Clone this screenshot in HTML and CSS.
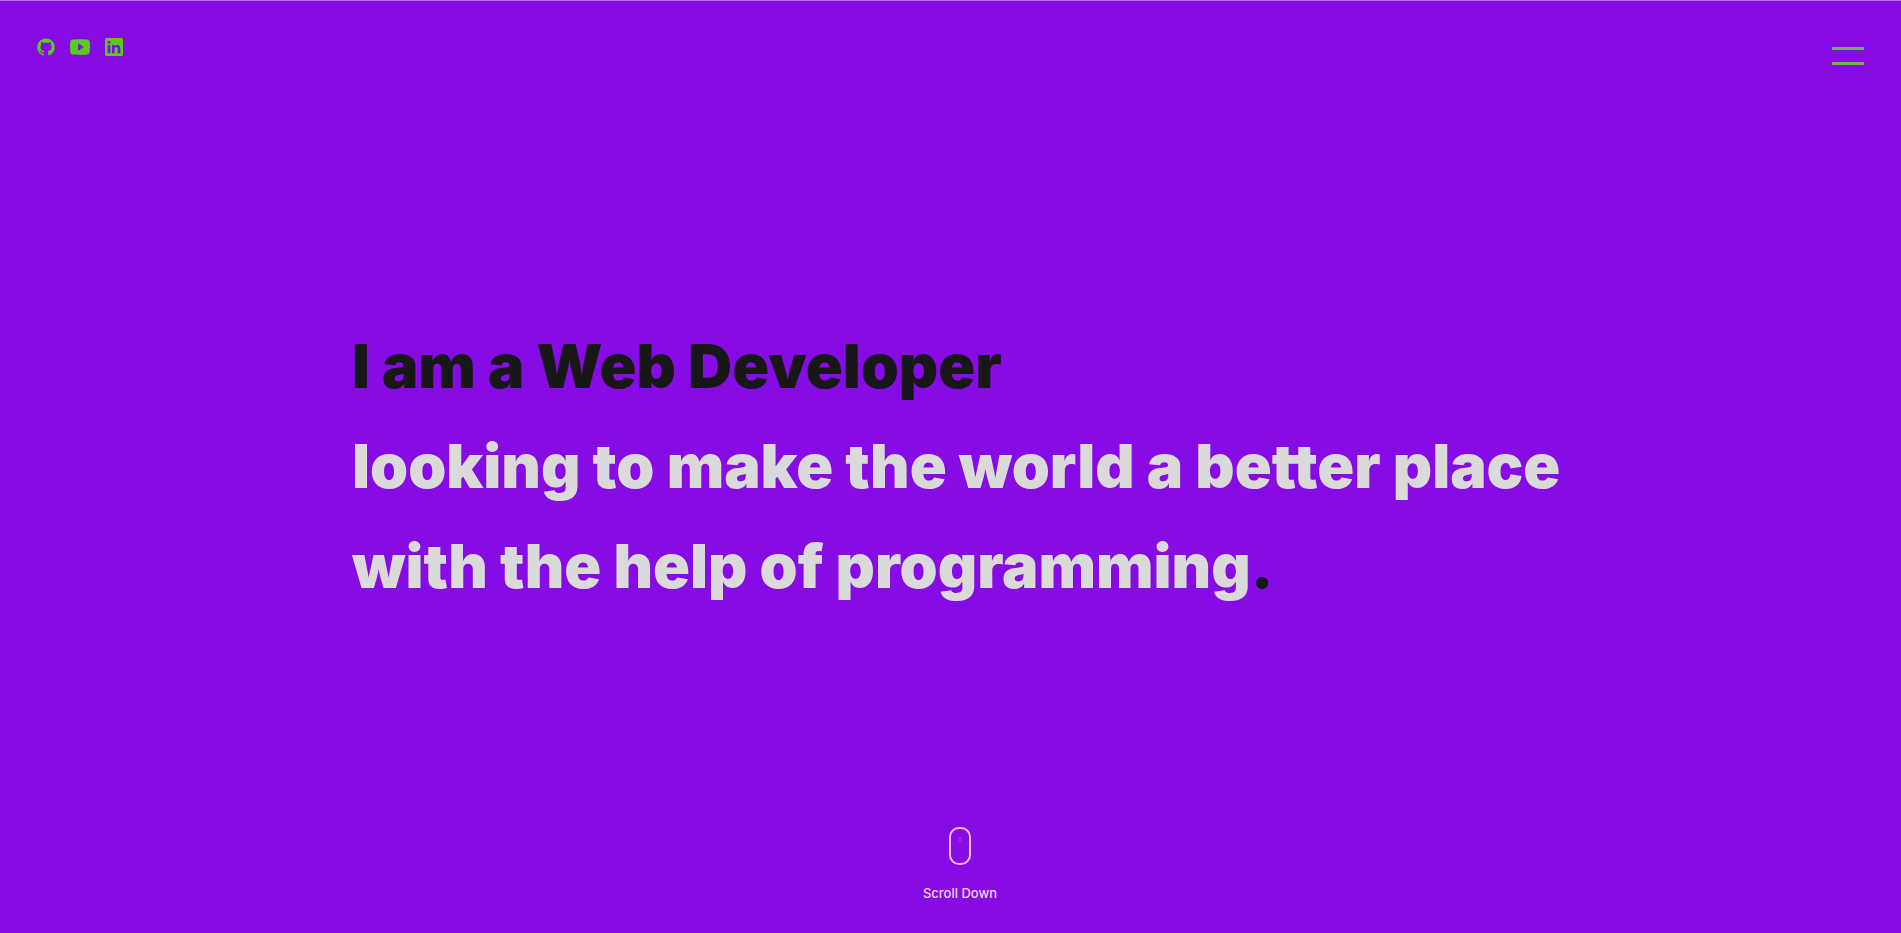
FILE: index.html
```html
<!DOCTYPE html>
<html lang="en">
<head>
<meta charset="utf-8">
<meta name="viewport" content="width=device-width, initial-scale=1">
<title>Web Developer</title>
<link rel="stylesheet" href="styles.css">
</head>
<body>
<header class="header">
  <nav class="social" aria-label="Social links">
    <a class="social-link" href="#github" aria-label="GitHub"><svg class="icon" viewBox="-3 -3 30 30"><path d="M12 1.300C5.900 1.300 1 6.200 1 12.300c0 4.850 3.150 8.970 7.520 10.430.55.1.75-.24.75-.53v-2.050c-3.060.67-3.700-1.300-3.700-1.300-.5-1.270-1.220-1.600-1.220-1.600-1-.68.08-.67.08-.67 1.100.08 1.680 1.130 1.680 1.130.98 1.680 2.570 1.200 3.200.91.1-.71.380-1.200.7-1.470-2.440-.28-5-1.220-5-5.440 0-1.200.43-2.180 1.130-2.950-.11-.28-.49-1.400.11-2.910 0 0 .92-.3 3.020 1.130a10.500 10.500 0 0 1 5.500 0c2.100-1.430 3.020-1.130 3.020-1.130.6 1.510.22 2.630.11 2.910.7.770 1.130 1.750 1.130 2.950 0 4.230-2.580 5.150-5.030 5.430.4.340.75 1.010.75 2.040v3.020c0 .3.2.64.76.53A11 11 0 0 0 12 1.300z"/></svg></a>
    <a class="social-link" href="#youtube" aria-label="YouTube"><svg class="icon" viewBox="0 0 24 24"><path fill-rule="evenodd" d="M5 4.500C8 4 16 4 19 4.500c2 .2 2.700 1.200 2.800 3 .3 3 .3 6 0 9-.1 1.800-.8 2.800-2.800 3-3 .5-11 .5-14 0-2-.2-2.700-1.200-2.800-3-.3-3-.3-6 0-9 .1-1.800.8-2.800 2.800-3zM10 8.200v7.600l6-3.800z"/></svg></a>
    <a class="social-link" href="#linkedin" aria-label="LinkedIn"><svg class="icon" viewBox="0 0 24 24"><path fill-rule="evenodd" d="M4.500 3h15A1.500 1.500 0 0 1 21 4.500v15a1.500 1.500 0 0 1-1.500 1.500h-15A1.500 1.500 0 0 1 3 19.500v-15A1.500 1.500 0 0 1 4.500 3zM5.700 10v8.300h2.600V10zM7 5.700a1.500 1.500 0 1 0 0 3 1.500 1.500 0 0 0 0-3zM10 10v8.300h2.600v-4.100c0-2.500 3.100-2.700 3.100 0v4.100h2.600v-5c0-4-4.200-3.900-5.700-1.900V10z"/></svg></a>
  </nav>
  <button class="menu" type="button" aria-label="Open menu"><span class="menu-bar"></span><span class="menu-bar"></span></button>
</header>
<main class="hero">
  <h1 class="title"><span class="dark">I am a Web Developer</span><br>looking to make the world a better place<br>with the help of programming<span class="dark">.</span></h1>
</main>
<footer class="footer">
  <a class="scroll" href="#next"><span class="mouse"><span class="wheel"></span></span><span>Scroll Down</span></a>
</footer>
</body>
</html>
```
FILE: styles.css
```css
* {
  box-sizing: border-box;
}

body {
  margin: 0;
  min-height: 100vh;
  display: flex;
  flex-direction: column;
  border-top: 1px solid #b777dc;
  background: #860be4;
  color: #dadada;
  font-family: Inter, "Liberation Sans", sans-serif;
}

.header {
  display: flex;
  justify-content: space-between;
  align-items: flex-start;
  padding: 34px 37px 0 34px;
}

.social {
  display: flex;
  gap: 10px;
}

.social-link {
  display: block;
  color: #58cc16;
}

.icon {
  display: block;
  width: 24px;
  height: 24px;
  fill: currentColor;
}

.menu {
  display: flex;
  flex-direction: column;
  gap: 12px;
  width: 32px;
  margin: 12px 0 0;
  padding: 0;
  border: 0;
  background: none;
}

.menu-bar {
  height: 3px;
  background: #6fb545;
}

.hero {
  flex: 1;
  display: flex;
  align-items: center;
  padding: 40px 0 0 352px;
}

.title {
  margin: 0;
  font-size: 61px;
  font-weight: 900;
  line-height: 100px;
}

.dark {
  color: #171717;
}

.footer {
  display: flex;
  justify-content: center;
  padding: 0 0 30px 19px;
}

.scroll {
  display: flex;
  flex-direction: column;
  align-items: center;
  gap: 18px;
  color: #eed5fa;
  font-size: 13px;
  font-weight: 500;
  line-height: 20px;
  text-decoration: none;
}

.mouse {
  display: flex;
  justify-content: center;
  width: 22px;
  height: 38px;
  padding-top: 8px;
  border: 2px solid #f3bdfa;
  border-radius: 10px;
}

.wheel {
  width: 4px;
  height: 6px;
  border-radius: 2px;
  background: #a41bd5;
}
```
